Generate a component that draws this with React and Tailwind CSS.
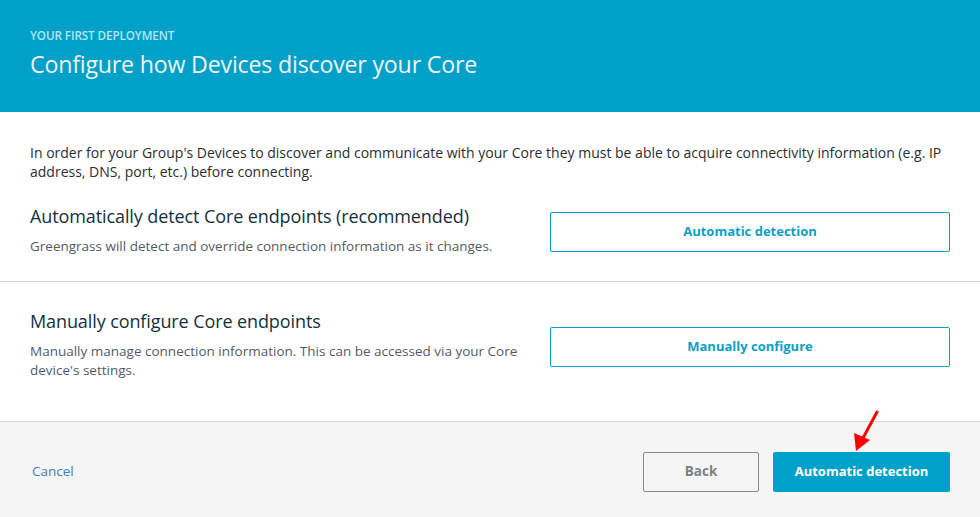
import React from "react";

const font = { fontFamily: '"Open Sans", "Noto Sans", Arial, sans-serif' };

const OptionRow = ({ title, desc, button, buttonTop, className }) => (
  <div className={`flex items-start justify-between ${className}`}>
    <div className="w-[500px]">
      <h2 className="text-[18px] leading-[22px] text-[#15303d] tracking-[-0.1px]">{title}</h2>
      <p className="mt-[10px] text-[13.5px] leading-[19px] text-[#545b64]">{desc}</p>
    </div>
    <button
      className={`w-[400px] h-[40px] border border-[#00a1c9] rounded-[2px] bg-white text-[13px] font-bold text-[#0a9fc7] ${buttonTop}`}
    >
      {button}
    </button>
  </div>
);

export default function App() {
  return (
    <div className="w-[980px] h-[517px] bg-white overflow-hidden flex flex-col" style={font}>
      <div className="h-[112px] bg-[#00a1c9] px-[30px] pt-[28px]">
        <div className="text-[11.7px] leading-[14px] font-semibold text-[#b4e6f5] tracking-[-0.1px]">
          YOUR FIRST DEPLOYMENT
        </div>
        <h1 className="mt-[6px] text-[23.2px] leading-[32px] text-[#f1f3f3] tracking-[-0.2px]">
          Configure how Devices discover your Core
        </h1>
      </div>

      <div className="px-[30px] pt-[31px] h-[170px] border-b border-[#d5d5d5]">
        <p className="text-[14px] leading-[19px] text-[#2a2e33] tracking-[0px]">
          In order for your Group's Devices to discover and communicate with your Core they must be able to acquire
          connectivity information (e.g. IP address, DNS, port, etc.) before connecting.
        </p>
        <OptionRow
          className="mt-[24px]"
          buttonTop="mt-[7px]"
          title="Automatically detect Core endpoints (recommended)"
          desc="Greengrass will detect and override connection information as it changes."
          button="Automatic detection"
        />
      </div>

      <div className="px-[30px] pt-[28px] h-[140px] border-b border-[#d5d5d5]">
        <OptionRow
          buttonTop="mt-[17px]"
          title="Manually configure Core endpoints"
          desc={
            <>
              Manually manage connection information. This can be accessed via your Core
              <br />
              device's settings.
            </>
          }
          button="Manually configure"
        />
      </div>

      <div className="flex-1 bg-[#f5f5f5] relative flex items-center justify-between pl-[32px] pr-[30px]">
        <a className="text-[13.5px] text-[#3f7fbf] mt-[4px]">Cancel</a>
        <div className="flex items-center gap-[14px] mt-[4px]">
          <button className="w-[116px] h-[40px] border border-[#8a8a8a] rounded-[2px] bg-[#f5f5f5] text-[13.5px] font-bold text-[#808080]">
            Back
          </button>
          <button className="w-[177px] h-[40px] rounded-[2px] bg-[#00a1c9] text-[13px] font-bold text-white">
            Automatic detection
          </button>
        </div>
        <svg className="absolute left-[848px] top-[-12px]" width="36" height="48" viewBox="0 0 36 48">
          <line x1="29" y1="2" x2="15" y2="28" stroke="#ff0000" strokeWidth="3" strokeLinecap="round" />
          <polygon points="8,41 6,23 22,30" fill="#ff0000" />
        </svg>
      </div>
    </div>
  );
}
